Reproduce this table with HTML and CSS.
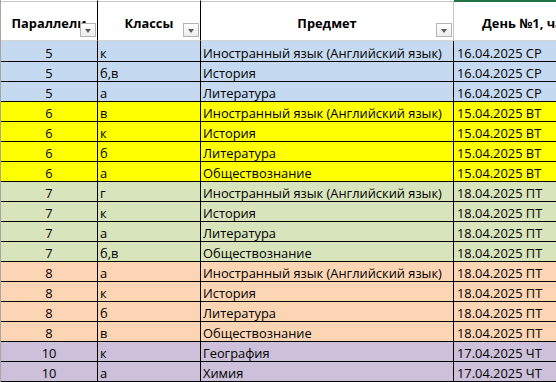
FILE: index.html
```html
<!DOCTYPE html>
<html lang="ru">
<head>
<meta charset="utf-8">
<title>Расписание</title>
<link rel="stylesheet" href="styles.css">
</head>
<body>
<div class="sheet">
  <div class="row head">
    <div class="cell c1"><span class="htext">Параллели</span><span class="filter"></span></div>
    <div class="cell c2"><span class="htext">Классы</span><span class="filter"></span></div>
    <div class="cell c3"><span class="htext">Предмет</span><span class="filter"></span></div>
    <div class="cell c4 sel"><span class="htext left">День №1, час проведения</span></div>
  </div>
  <div class="row blue"><div class="cell c1 num">5</div><div class="cell c2">к</div><div class="cell c3">Иностранный язык (Английский язык)</div><div class="cell c4">16.04.2025 СР</div></div>
  <div class="row blue"><div class="cell c1 num">5</div><div class="cell c2">б,в</div><div class="cell c3">История</div><div class="cell c4">16.04.2025 СР</div></div>
  <div class="row blue"><div class="cell c1 num">5</div><div class="cell c2">а</div><div class="cell c3">Литература</div><div class="cell c4">16.04.2025 СР</div></div>
  <div class="row yellow"><div class="cell c1 num">6</div><div class="cell c2">в</div><div class="cell c3">Иностранный язык (Английский язык)</div><div class="cell c4">15.04.2025 ВТ</div></div>
  <div class="row yellow"><div class="cell c1 num">6</div><div class="cell c2">к</div><div class="cell c3">История</div><div class="cell c4">15.04.2025 ВТ</div></div>
  <div class="row yellow"><div class="cell c1 num">6</div><div class="cell c2">б</div><div class="cell c3">Литература</div><div class="cell c4">15.04.2025 ВТ</div></div>
  <div class="row yellow"><div class="cell c1 num">6</div><div class="cell c2">а</div><div class="cell c3">Обществознание</div><div class="cell c4">15.04.2025 ВТ</div></div>
  <div class="row green"><div class="cell c1 num">7</div><div class="cell c2">г</div><div class="cell c3">Иностранный язык (Английский язык)</div><div class="cell c4">18.04.2025 ПТ</div></div>
  <div class="row green"><div class="cell c1 num">7</div><div class="cell c2">к</div><div class="cell c3">История</div><div class="cell c4">18.04.2025 ПТ</div></div>
  <div class="row green"><div class="cell c1 num">7</div><div class="cell c2">а</div><div class="cell c3">Литература</div><div class="cell c4">18.04.2025 ПТ</div></div>
  <div class="row green"><div class="cell c1 num">7</div><div class="cell c2">б,в</div><div class="cell c3">Обществознание</div><div class="cell c4">18.04.2025 ПТ</div></div>
  <div class="row peach"><div class="cell c1 num">8</div><div class="cell c2">а</div><div class="cell c3">Иностранный язык (Английский язык)</div><div class="cell c4">18.04.2025 ПТ</div></div>
  <div class="row peach"><div class="cell c1 num">8</div><div class="cell c2">к</div><div class="cell c3">История</div><div class="cell c4">18.04.2025 ПТ</div></div>
  <div class="row peach"><div class="cell c1 num">8</div><div class="cell c2">б</div><div class="cell c3">Литература</div><div class="cell c4">18.04.2025 ПТ</div></div>
  <div class="row peach"><div class="cell c1 num">8</div><div class="cell c2">в</div><div class="cell c3">Обществознание</div><div class="cell c4">18.04.2025 ПТ</div></div>
  <div class="row lilac"><div class="cell c1 num">10</div><div class="cell c2">к</div><div class="cell c3">География</div><div class="cell c4">17.04.2025 ЧТ</div></div>
  <div class="row lilac"><div class="cell c1 num">10</div><div class="cell c2">а</div><div class="cell c3">Химия</div><div class="cell c4">17.04.2025 ЧТ</div></div>
</div>
</body>
</html>
```
FILE: styles.css
```css
html, body {
  margin: 0;
  padding: 0;
  background: #ffffff;
}
body {
  width: 556px;
  height: 382px;
  overflow: hidden;
  font-family: "Open Sans", "Liberation Sans", sans-serif;
  font-size: 12.85px;
  color: #000000;
}
.sheet {
  width: 720px;
  border-left: 1px solid #a6a6a6;
}
.row {
  display: grid;
  grid-template-columns: 97px 103px 253px 267px;
  height: 20px;
}
.row.head {
  height: 41px;
}
.row:nth-child(2) {
  height: 21px;
}
.cell {
  box-sizing: border-box;
  border-right: 1px solid #000000;
  border-bottom: 1px solid #000000;
  display: flex;
  align-items: flex-end;
  line-height: 16px;
  white-space: nowrap;
  overflow: hidden;
  padding-left: 2px;
}
.c4 {
  padding-left: 3px;
}
.num {
  justify-content: center;
  padding-left: 0;
}
.head .cell {
  position: relative;
  background: #ffffff;
  border-top: 1px solid #ffffff;
  box-shadow: inset 0 1px 0 #c6c6c6;
  border-bottom: 1px solid #d4d4d4;
  justify-content: center;
  padding: 0 0 9px 0;
  font-weight: 700;
}
.head .c3 {
  border-right-color: #c6c6c6;
}
.head .sel {
  border-top: 2px solid #217346;
  box-shadow: none;
  justify-content: flex-start;
  padding-left: 28px;
}
.filter {
  position: absolute;
  right: 1px;
  top: 22px;
  width: 16px;
  height: 14px;
  box-sizing: border-box;
  border: 1px solid #b4b4b4;
  background: linear-gradient(#ffffff, #ececec);
}
.filter::after {
  content: "";
  position: absolute;
  left: 4px;
  top: 5px;
  border-left: 3.5px solid transparent;
  border-right: 3.5px solid transparent;
  border-top: 4px solid #5a5a5a;
}
.blue { background: #c5d9f1; }
.yellow { background: #ffff00; }
.green { background: #d8e4bc; }
.peach { background: #fcd5b4; }
.lilac { background: #ccc0da; }
```
